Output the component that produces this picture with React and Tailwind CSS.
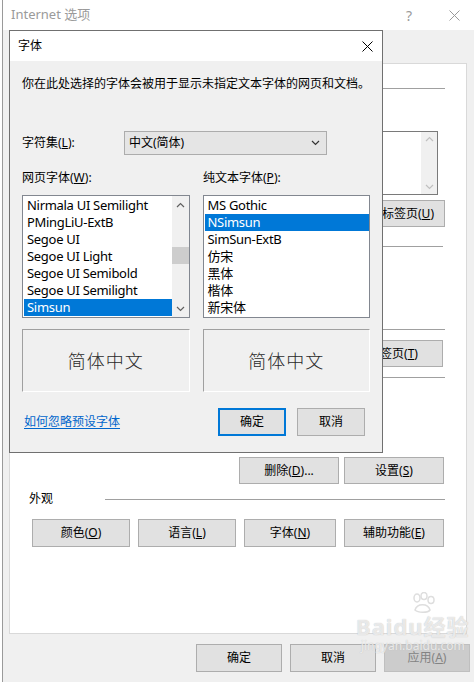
import clsx from "clsx";

const Btn = ({ children, className, primary, disabled }) => (
  <div
    className={clsx(
      "flex items-center justify-center text-[12px]",
      primary
        ? "border-2 border-[#0078d7] bg-[#e1e1e1] text-black"
        : disabled
        ? "border border-[#bfbfbf] bg-[#cccccc] text-[#838383]"
        : "border border-[#adadad] bg-[#e1e1e1] text-black",
      className
    )}
  >
    {children}
  </div>
);

const GroupHead = ({ label, lineFrom, className }) => (
  <div className={clsx("flex h-4 items-center", className)}>
    <span className={clsx("text-[12px] leading-4 text-black", lineFrom)}>{label}</span>
    <div className="h-px flex-1 bg-[#a0a0a0]" />
  </div>
);

const Chevron = ({ dir = "down", color = "#606060" }) => (
  <svg width="9" height="6" viewBox="0 0 9 6">
    <polyline
      points={dir === "down" ? "1,1 4.5,4.5 8,1" : "1,5 4.5,1.5 8,5"}
      fill="none"
      stroke={color}
      strokeWidth="1.2"
    />
  </svg>
);

const ListBox = ({ items, selected, scroll }) => (
  <div className="flex h-[123px] w-[168px] border border-[#828790] bg-white">
    <div className="flex flex-1 flex-col py-px pl-px">
      {items.map((it) => (
        <div
          key={it}
          className={clsx(
            "h-[17px] pl-[3px] text-[13px] leading-[17px] tracking-[-0.3px] whitespace-nowrap",
            it === selected ? "bg-[#0078d7] text-white" : "text-black"
          )}
        >
          {it}
        </div>
      ))}
    </div>
    {scroll && (
      <div className="flex w-[17px] flex-col items-center bg-[#f0f0f0]">
        <div className="flex h-[17px] items-center">
          <Chevron dir="up" />
        </div>
        <div className="mt-[34px] h-[17px] w-full bg-[#cdcdcd]" />
        <div className="flex-1" />
        <div className="flex h-[17px] items-center">
          <Chevron dir="down" />
        </div>
      </div>
    )}
  </div>
);

const Preview = () => (
  <div className="flex h-[63px] w-[168px] items-center justify-center border border-t-[#a0a0a0] border-l-[#a0a0a0] border-r-white border-b-white">
    <span className="font-['Noto_Sans_CJK_SC',serif] text-[18px] font-light tracking-[1px] text-[#2b2b2b]">
      简体中文
    </span>
  </div>
);

function FontDialog() {
  return (
    <div className="absolute top-[30px] left-[9px] w-[374px] border border-[#707070] bg-[#f0f0f0]">
      <div className="flex h-[30px] items-center justify-between bg-white pr-[9px] pl-[8px]">
        <span className="text-[12px] text-black">字体</span>
        <svg width="11" height="11" viewBox="0 0 11 11">
          <path d="M0.5 0.5 L10.5 10.5 M10.5 0.5 L0.5 10.5" stroke="#000" strokeWidth="1" />
        </svg>
      </div>

      <div className="flex flex-col px-[12px] pb-[16px]">
        <p className="mt-[15px] text-[12px] leading-4 text-black">
          你在此处选择的字体会被用于显示未指定文本字体的网页和文档。
        </p>

        <div className="mt-[39px] flex items-center">
          <span className="w-[102px] text-[12px] text-black">
            字符集(<u>L</u>):
          </span>
          <div className="flex h-[24px] w-[203px] items-center justify-between border border-[#acacac] bg-[#e5e5e5] pr-[6px] pl-[4px]">
            <span className="text-[12px] text-black">中文(简体)</span>
            <Chevron dir="down" color="#333" />
          </div>
        </div>

        <div className="mt-[15px] flex gap-[13px] text-[12px] leading-4 text-black">
          <span className="w-[168px]">
            网页字体(<u>W</u>):
          </span>
          <span>
            纯文本字体(<u>P</u>):
          </span>
        </div>

        <div className="mt-[9px] flex gap-[13px]">
          <ListBox
            scroll
            selected="Simsun"
            items={[
              "Nirmala UI Semilight",
              "PMingLiU-ExtB",
              "Segoe UI",
              "Segoe UI Light",
              "Segoe UI Semibold",
              "Segoe UI Semilight",
              "Simsun",
            ]}
          />
          <ListBox
            selected="NSimsun"
            items={["MS Gothic", "NSimsun", "SimSun-ExtB", "仿宋", "黑体", "楷体", "新宋体"]}
          />
        </div>

        <div className="mt-[11px] flex gap-[13px]">
          <Preview />
          <Preview />
        </div>

        <div className="mt-[16px] flex items-center justify-between pr-[5px] pl-[2px]">
          <span className="text-[12px] text-[#0066cc] underline underline-offset-2">如何忽略预设字体</span>
          <div className="flex gap-[11px]">
            <Btn primary className="h-[28px] w-[68px]">
              确定
            </Btn>
            <Btn className="h-[28px] w-[68px]">取消</Btn>
          </div>
        </div>
      </div>
    </div>
  );
}

export default function App() {
  return (
    <div className="relative h-[682px] w-[474px] overflow-hidden bg-white pl-[2px] font-['Segoe_UI','Noto_Sans','Noto_Sans_CJK_SC',sans-serif]">
      <div className="flex h-full flex-col border-l border-[#9a9a9a] bg-[#f0f0f0]">
        {/* title bar */}
        <div className="flex h-[30px] items-center bg-white pl-[8px]">
          <span className="text-[13px] text-[#9a9a9a]">Internet 选项</span>
          <span className="ml-auto text-[14px] text-[#9a9a9a]">?</span>
          <svg className="mr-[14px] ml-[37px]" width="11" height="11" viewBox="0 0 11 11">
            <path d="M0.5 0.5 L10.5 10.5 M10.5 0.5 L0.5 10.5" stroke="#9a9a9a" strokeWidth="1" />
          </svg>
        </div>

        <div className="h-[33px]" />

        {/* general tab panel, its left part lies under the font dialog */}
        <div className="mr-[7px] ml-[6px] flex h-[571px] flex-col border border-[#d9d9d9] bg-white pr-[21px] pl-[19px]">
          <GroupHead label="" lineFrom="w-[40px]" className="mt-[16px]" />
          <div className="mt-[35px] mr-[7px] ml-[20px] flex h-[64px] justify-end border border-[#7a7a7a]">
            <div className="flex w-[16px] flex-col items-center justify-between bg-[#f0f0f0] py-[4px]">
              <Chevron dir="up" color="#c0c0c0" />
              <Chevron dir="down" color="#c0c0c0" />
            </div>
          </div>
          <div className="mt-[5px] flex justify-end">
            <Btn className="h-[27px] w-[110px]">
              使用新标签页(<u>U</u>)
            </Btn>
          </div>
          <GroupHead label="" lineFrom="w-[40px]" className="mt-[11px] pr-[2px]" />
          <GroupHead label="" lineFrom="w-[50px]" className="mt-[67px]" />
          <div className="mt-[3px] flex justify-end pr-[2px]">
            <Btn className="h-[27px] w-[100px]">
              标签页(<u>T</u>)
            </Btn>
          </div>
          <GroupHead label="" lineFrom="w-[80px]" className="mt-[2px]" />
          <div className="mt-[16px] flex justify-end pr-[57px] text-[12px] leading-4 text-black">
            保存的密码和网页表单信息。
          </div>
          <div className="mt-[40px] flex justify-end gap-[5px] pr-[1px]">
            <Btn className="h-[27px] w-[100px]">
              删除(<u>D</u>)...
            </Btn>
            <Btn className="h-[27px] w-[100px]">
              设置(<u>S</u>)
            </Btn>
          </div>
          <GroupHead label="外观" lineFrom="mr-[52px]" className="mt-[7px]" />
          <div className="mt-[12px] ml-[3px] flex gap-[8px]">
            <Btn className="h-[28px] w-[98px]">
              颜色(<u>O</u>)
            </Btn>
            <Btn className="h-[28px] w-[98px]">
              语言(<u>L</u>)
            </Btn>
            <Btn className="h-[28px] w-[92px]">
              字体(<u>N</u>)
            </Btn>
            <Btn className="h-[28px] w-[100px]">
              辅助功能(<u>E</u>)
            </Btn>
          </div>
        </div>

        <div className="mt-[10px] mr-[4px] flex justify-end gap-[8px]">
          <Btn className="h-[28px] w-[86px]">确定</Btn>
          <Btn className="h-[28px] w-[86px]">取消</Btn>
          <Btn disabled className="h-[28px] w-[86px]">
            应用(<u>A</u>)
          </Btn>
        </div>
      </div>

      <FontDialog />

      {/* watermark */}
      <div className="pointer-events-none absolute top-[592px] left-[356px] flex flex-col items-center text-white/70 [text-shadow:0_0_1px_#b5b5b5]">
        <svg width="26" height="22" viewBox="0 0 26 22" className="ml-[20px]">
          <g fill="none" stroke="#dedede" strokeWidth="1.5">
            <ellipse cx="7" cy="6" rx="3" ry="4" />
            <ellipse cx="14" cy="4" rx="3" ry="3.5" />
            <ellipse cx="21" cy="8" rx="3" ry="3.5" />
            <path d="M5 18 C7 11 18 11 20 18 C18 21 8 21 5 18 Z" />
          </g>
        </svg>
        <span className="text-[22px] leading-6 font-bold tracking-[1px]">Baidu经验</span>
        <span className="text-[12px] leading-4">jingyan.baidu.com</span>
      </div>
    </div>
  );
}
